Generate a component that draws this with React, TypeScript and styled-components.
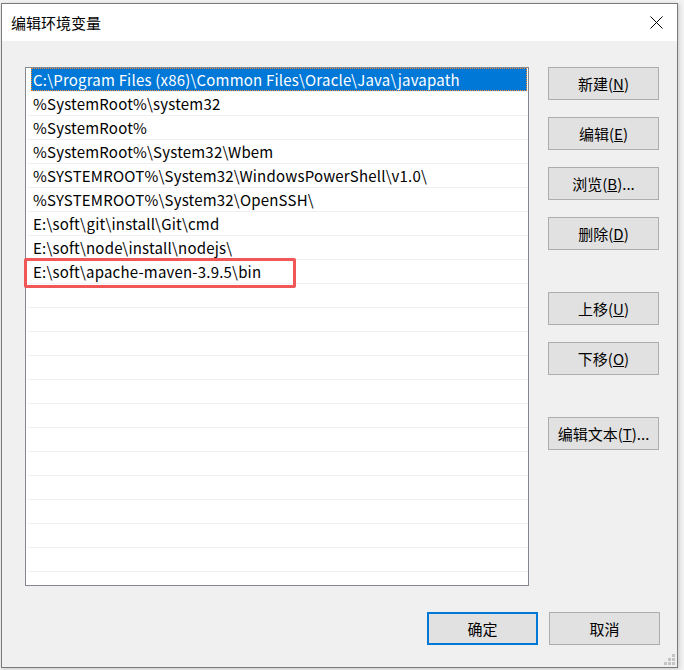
import React from "react";
import styled, { createGlobalStyle } from "styled-components";

const GlobalStyle = createGlobalStyle`
  html, body { margin: 0; padding: 0; }
  body {
    background: #f2f2f2;
    font-family: "Noto Sans CJK SC", "Noto Sans", sans-serif;
    color: #000;
  }
`;

const Page = styled.div`
  width: 684px;
  height: 670px;
  padding: 3px 0 0 1px;
  box-sizing: border-box;
  overflow: hidden;
`;

const Window = styled.div`
  position: relative;
  width: 677px;
  height: 665px;
  box-sizing: border-box;
  border: 1px solid #7a7a7a;
  background: #f0f0f0;
  box-shadow: 1px 1px 4px rgba(0, 0, 0, 0.18);
  display: flex;
  flex-direction: column;
`;

const TitleBar = styled.div`
  height: 37px;
  flex: none;
  background: #fff;
  display: flex;
  align-items: center;
  justify-content: space-between;
  padding: 0 14px 0 9px;
  font-size: 15px;
`;

const Title = styled.span`
  line-height: 20px;
`;

const CloseIcon = styled.svg`
  width: 13px;
  height: 13px;
  display: block;
`;

const Body = styled.div`
  display: flex;
  flex-direction: column;
  padding: 26px 17px 0 23px;
`;

const Main = styled.div`
  display: grid;
  grid-template-columns: 504px 111px;
  column-gap: 19px;
`;

const ListBox = styled.div`
  position: relative;
  height: 519px;
  box-sizing: border-box;
  border: 1px solid #828790;
  background: #fff;
  padding: 0 0 0 1px;
`;

const Row = styled.div`
  height: 24px;
  box-sizing: border-box;
  border-bottom: 1px solid #f0f0f0;
  padding: 0 1px 0 4px;
  display: flex;
`;

const Cell = styled.div<{ $selected?: boolean }>`
  flex: 1;
  height: 23px;
  box-sizing: border-box;
  padding-left: 2px;
  font-size: 15px;
  letter-spacing: 0.2px;
  line-height: 23px;
  white-space: nowrap;
  color: ${(p) => (p.$selected ? "#fff" : "#000")};
  background: ${(p) => (p.$selected ? "#0078d7" : "transparent")};
  outline: ${(p) => (p.$selected ? "1px dotted #ff8728" : "none")};
  outline-offset: -1px;
`;

const Highlight = styled.div`
  position: absolute;
  left: -2px;
  top: 190px;
  width: 272px;
  height: 30px;
  box-sizing: border-box;
  border: 3px solid #f25757;
  border-radius: 2px;
  pointer-events: none;
`;

const ButtonColumn = styled.div`
  display: flex;
  flex-direction: column;
`;

const Button = styled.button<{ $gap?: number; $primary?: boolean }>`
  width: 111px;
  height: 33px;
  margin-top: ${(p) => p.$gap ?? 0}px;
  box-sizing: border-box;
  border: ${(p) => (p.$primary ? "2px solid #0078d7" : "1px solid #adadad")};
  background: #e1e1e1;
  font-family: "Noto Sans CJK SC", "Noto Sans", sans-serif;
  font-size: 15px;
  color: #000;
  padding: 0;
  line-height: 20px;
  white-space: nowrap;
`;

const Footer = styled.div`
  display: flex;
  justify-content: flex-end;
  gap: 11px;
  margin-top: 26px;
`;

const Grip = styled.svg`
  position: absolute;
  right: 1px;
  bottom: 1px;
  width: 12px;
  height: 12px;
`;

const entries = [
  "C:\\Program Files (x86)\\Common Files\\Oracle\\Java\\javapath",
  "%SystemRoot%\\system32",
  "%SystemRoot%",
  "%SystemRoot%\\System32\\Wbem",
  "%SYSTEMROOT%\\System32\\WindowsPowerShell\\v1.0\\",
  "%SYSTEMROOT%\\System32\\OpenSSH\\",
  "E:\\soft\\git\\install\\Git\\cmd",
  "E:\\soft\\node\\install\\nodejs\\",
  "E:\\soft\\apache-maven-3.9.5\\bin",
];

const rows = [...entries, ...Array(21 - entries.length).fill("")];

const sideButtons: { label: string; key: string; tail?: string; gap: number }[] = [
  { label: "新建(", key: "N", gap: 0 },
  { label: "编辑(", key: "E", gap: 17 },
  { label: "浏览(", key: "B", tail: ")...", gap: 17 },
  { label: "删除(", key: "D", gap: 17 },
  { label: "上移(", key: "U", gap: 42 },
  { label: "下移(", key: "O", gap: 17 },
  { label: "编辑文本(", key: "T", tail: ")...", gap: 42 },
];

export default function App() {
  return (
    <Page>
      <GlobalStyle />
      <Window>
        <TitleBar>
          <Title>编辑环境变量</Title>
          <CloseIcon viewBox="0 0 13 13">
            <path d="M0.5 0.5 L12.5 12.5 M12.5 0.5 L0.5 12.5" stroke="#000" strokeWidth="1" fill="none" />
          </CloseIcon>
        </TitleBar>
        <Body>
          <Main>
            <ListBox>
              {rows.map((r, i) => (
                <Row key={i}>
                  <Cell $selected={i === 0}>{r}</Cell>
                </Row>
              ))}
              <Highlight />
            </ListBox>
            <ButtonColumn>
              {sideButtons.map((b) => (
                <Button key={b.key} $gap={b.gap}>
                  {b.label}
                  <u>{b.key}</u>
                  {b.tail ?? ")"}
                </Button>
              ))}
            </ButtonColumn>
          </Main>
          <Footer>
            <Button $primary>确定</Button>
            <Button>取消</Button>
          </Footer>
        </Body>
        <Grip viewBox="0 0 12 12">
          <g fill="#c4c4c4">
            <rect x="8" y="0" width="3" height="3" />
            <rect x="4" y="4" width="3" height="3" />
            <rect x="8" y="4" width="3" height="3" />
            <rect x="0" y="8" width="3" height="3" />
            <rect x="4" y="8" width="3" height="3" />
            <rect x="8" y="8" width="3" height="3" />
          </g>
        </Grip>
      </Window>
    </Page>
  );
}
